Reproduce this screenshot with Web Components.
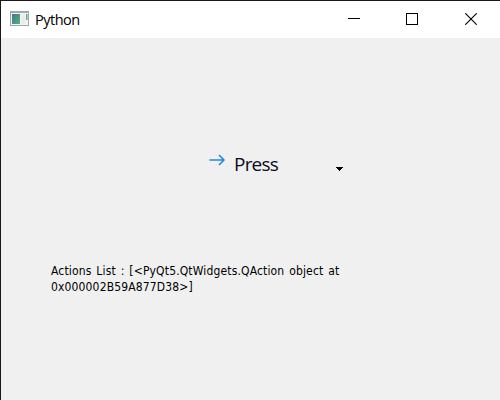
<!DOCTYPE html>
<html lang="en">
<head>
<meta charset="utf-8">
<title>Python</title>
<style>
body {
    margin: 0;
    width: 500px;
    height: 400px;
    overflow: hidden;
}
</style>
</head>
<body>

<app-window>
    <title-bar slot="title">Python</title-bar>
    <tool-button>Press</tool-button>
    <info-label>Actions List : [&lt;PyQt5.QtWidgets.QAction object at<br>0x000002B59A877D38&gt;]</info-label>
</app-window>

<script>
const templateWindow = document.createElement('template');
templateWindow.innerHTML = `
<style>
:host {
    display: flex;
    flex-direction: column;
    box-sizing: border-box;
    width: 500px;
    height: 400px;
    border-top: 1px solid #1a181a;
    border-left: 1px solid #1a181a;
    background: #f0f0f0;
    color: #000;
}
.content {
    flex: 1;
    display: flex;
    flex-direction: column;
    align-items: flex-start;
    padding: 101px 0 0 50px;
}
</style>
<slot name="title"></slot>
<div class="content"><slot></slot></div>
`;

const templateTitle = document.createElement('template');
templateTitle.innerHTML = `
<style>
:host {
    display: flex;
    align-items: center;
    height: 37px;
    background: #fff;
    font: 14.5px/20px "Open Sans", "Noto Sans", sans-serif;
}
svg {
    display: block;
}
.app-icon {
    margin: 0 5px 1px 9px;
}
.caption {
    flex: 1;
    letter-spacing: -0.5px;
}
.buttons {
    display: flex;
    gap: 46px;
    padding: 0 23px 1px 0;
}
.close {
    margin-left: 1px;
}
</style>
<svg class="app-icon" width="20" height="16" viewBox="0 0 20 16">
    <defs>
        <linearGradient id="pane" x1="0" y1="0" x2="1" y2="1">
            <stop offset="0" stop-color="#3f7896"/>
            <stop offset="1" stop-color="#5caf7c"/>
        </linearGradient>
    </defs>
    <rect x="0.5" y="0.5" width="18" height="14" fill="#f3f4f4" stroke="#a2a7ab"/>
    <path d="M0 1h19" stroke="#a3a9ae" stroke-width="2"/>
    <rect x="2" y="3" width="8" height="10" fill="url(#pane)"/>
    <rect x="11" y="3" width="4" height="10" fill="#e9ebec"/>
    <rect x="16" y="3" width="1.5" height="6" fill="#63a78f"/>
</svg>
<span class="caption"><slot></slot></span>
<div class="buttons">
    <svg width="12" height="12" shape-rendering="crispEdges"><path d="M0 5.5h12" stroke="#000"/></svg>
    <svg width="12" height="12"><rect x="0.5" y="0.5" width="11" height="11" fill="none" stroke="#000"/></svg>
    <svg class="close" width="12" height="12"><path d="M0.2 0.2L11.8 11.8M11.8 0.2L0.2 11.8" stroke="#000" stroke-width="1.1"/></svg>
</div>
`;

const templateButton = document.createElement('template');
templateButton.innerHTML = `
<style>
:host {
    display: flex;
    align-items: center;
    box-sizing: border-box;
    width: 300px;
    height: 50px;
    padding-left: 158px;
    font: 19px/24px "Open Sans", "Noto Sans", sans-serif;
    color: #0a0a20;
}
svg {
    display: block;
}
.icon {
    margin-bottom: 9px;
}
.text {
    width: 102px;
    margin-left: 8px;
    letter-spacing: -0.8px;
}
.menu {
    margin-top: 10px;
}
</style>
<svg class="icon" width="17" height="12" viewBox="0 0 17 12"><path d="M0.5 6H15M10 1L15 6L10 11" fill="none" stroke="#1e88e5" stroke-width="1.5"/></svg>
<span class="text"><slot></slot></span>
<svg class="menu" width="7" height="4" shape-rendering="crispEdges"><path d="M0 0h7v1h-1v1h-1v1h-1v1h-1v-1h-1v-1h-1v-1h-1z" fill="#000"/></svg>
`;

const templateLabel = document.createElement('template');
templateLabel.innerHTML = `
<style>
:host {
    display: block;
    margin-top: 74px;
    font: 12px/16px "DejaVu Sans Condensed", "DejaVu Sans", sans-serif;
    font-stretch: condensed;
    white-space: nowrap;
    letter-spacing: 0.15px;
    word-spacing: 1.3px;
}
</style>
<slot></slot>
`;

class AppWindow extends HTMLElement {
    constructor() {
        super();
        this.attachShadow({mode: 'open'});
        this.shadowRoot.appendChild(templateWindow.content.cloneNode(true));
    }
}

class TitleBar extends HTMLElement {
    constructor() {
        super();
        this.attachShadow({mode: 'open'});
        this.shadowRoot.appendChild(templateTitle.content.cloneNode(true));
    }
}

class ToolButton extends HTMLElement {
    constructor() {
        super();
        this.attachShadow({mode: 'open'});
        this.shadowRoot.appendChild(templateButton.content.cloneNode(true));
    }
}

class InfoLabel extends HTMLElement {
    constructor() {
        super();
        this.attachShadow({mode: 'open'});
        this.shadowRoot.appendChild(templateLabel.content.cloneNode(true));
    }
}

window.customElements.define('app-window', AppWindow);
window.customElements.define('title-bar', TitleBar);
window.customElements.define('tool-button', ToolButton);
window.customElements.define('info-label', InfoLabel);
</script>
</body>
</html>
